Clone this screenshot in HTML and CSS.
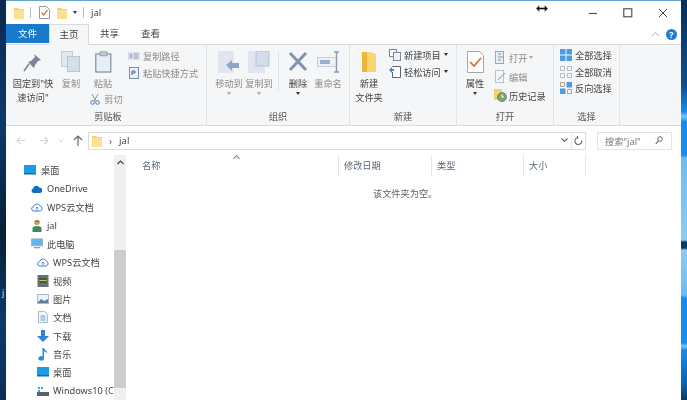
FILE: index.html
```html
<!DOCTYPE html>
<html lang="zh-CN">

<head>
  <meta charset="UTF-8" />
  <title>jal</title>
  <link rel="stylesheet" href="styles.css">
</head>

<body>
  <svg class="defs" width="0" height="0">
    <symbol id="folder" viewBox="0 0 10 12">
      <path d="M0 1h4l1 1h5v10H0z" fill="#fbe08f" />
      <path d="M0 1h4l1 1h5v1H0z" fill="#f5cf70" />
    </symbol>
    <symbol id="tree-cloud" viewBox="0 0 12 10">
      <path d="M3 9a2.2 2.2 0 0 1-.3-4.4 3.4 3.4 0 0 1 6.4-.6A2.6 2.6 0 0 1 9.3 9z" fill="#fff" stroke="#3f7fd6" stroke-width="1" />
      <path d="M6 8.5V5M4.6 6.4 6 5l1.4 1.4" fill="none" stroke="#3f7fd6" stroke-width=".8" />
    </symbol>
    <symbol id="desktop" viewBox="0 0 12 10">
      <rect x="0" y="0" width="12" height="9" fill="#1c9ae6" />
      <rect x="0" y="8" width="12" height="1.5" fill="#0f6cb5" />
    </symbol>
  </svg>

  <div class="screen">
    <div class="edge edge-left"><span class="edge-char">j</span></div>

    <div class="window">
      <div class="titlebar">
        <svg class="qa-folder" width="10" height="12"><use href="#folder" /></svg>
        <span class="qa-sep"></span>
        <svg class="qa-check" width="11" height="13" viewBox="0 0 11 13">
          <path d="M.5.5h7l3 3v9H.5z" fill="#fdfdfd" stroke="#9a9a9a" />
          <path d="M2.5 6.5l2 2.5 4-5" fill="none" stroke="#d9562b" stroke-width="1.2" />
        </svg>
        <svg class="qa-folder2" width="10" height="12"><use href="#folder" /></svg>
        <span class="caret qa-caret"></span>
        <span class="qa-sep qa-sep2"></span>
        <span class="title-text">jal</span>
        <div class="window-btns">
          <svg width="10" height="10" viewBox="0 0 10 10"><path d="M1 5.5h8" stroke="#555" stroke-width="1.2" /></svg>
          <svg width="10" height="10" viewBox="0 0 10 10"><rect x=".8" y=".8" width="8" height="8" fill="none" stroke="#444" stroke-width="1.1" /></svg>
          <svg width="10" height="10" viewBox="0 0 10 10"><path d="M1 1l8 8M9 1l-8 8" stroke="#444" stroke-width="1" /></svg>
        </div>
      </div>

      <div class="tabs">
        <div class="tab tab-file">文件</div>
        <div class="tab tab-active">主页</div>
        <div class="tab">共享</div>
        <div class="tab">查看</div>
        <div class="tabs-right">
          <svg width="9" height="6" viewBox="0 0 9 6"><path d="M1 5l3.5-3.5L8 5" fill="none" stroke="#aaa" stroke-width="1" /></svg>
          <span class="help">?</span>
        </div>
      </div>

      <div class="ribbon">
        <section class="group group-clip">
          <div class="group-body">
            <div class="big big-pin">
              <svg width="20" height="22" viewBox="0 0 20 22">
                <path d="M11 3l7 6-3 1-3 4-1 3-6-6 3-1 4-4z" fill="#7b8794" />
                <path d="M6 13l-5 7" stroke="#7b8794" stroke-width="1.6" />
              </svg>
              <span>固定到"快<br>速访问"</span>
            </div>
            <div class="big big-copy dim">
              <svg width="20" height="22" viewBox="0 0 20 22">
                <rect x=".5" y=".5" width="11" height="15" fill="#e3e8f0" stroke="#c5ccd6" />
                <rect x="6.5" y="5.5" width="12" height="15" fill="#d5deeb" stroke="#bac5d4" />
              </svg>
              <span>复制</span>
            </div>
            <div class="clip-col">
              <div class="big big-paste dim">
                <svg width="17" height="22" viewBox="0 0 17 22">
                  <rect x=".8" y="3" width="15" height="18" fill="#e9eef5" stroke="#7f8ea6" stroke-width="1.2" />
                  <rect x="5" y=".8" width="7" height="4" fill="#c4cbd5" stroke="#8d99ab" stroke-width=".8" />
                </svg>
                <span>粘贴</span>
              </div>
              <div class="small small-cut dim">
                <svg width="10" height="12" viewBox="0 0 10 12">
                  <path d="M2 1l4 7M8 1L4 8" stroke="#8b95a3" stroke-width="1" />
                  <circle cx="2.5" cy="9.5" r="1.8" fill="none" stroke="#4a78b5" />
                  <circle cx="7.5" cy="9.5" r="1.8" fill="none" stroke="#4a78b5" />
                </svg>
                <span>剪切</span>
              </div>
            </div>
            <div class="small-col small-col-clip dim">
              <div class="small">
                <svg width="12" height="8" viewBox="0 0 12 8"><rect width="12" height="8" fill="#d8deea" /><path d="M2 2l2 4M4 2l-2 4M6 2h4M6 4h4M6 6h4" stroke="#7f8ea6" stroke-width=".7" /></svg>
                <span>复制路径</span>
              </div>
              <div class="small">
                <svg width="10" height="12" viewBox="0 0 10 12"><rect x=".5" y=".5" width="9" height="11" fill="#eef2f7" stroke="#7f8ea6" /><path d="M3 8V4h3v2H3" fill="none" stroke="#3c6aa6" /></svg>
                <span>粘贴快捷方式</span>
              </div>
            </div>
          </div>
          <div class="group-label">剪贴板</div>
        </section>

        <section class="group group-org">
          <div class="group-body">
            <div class="big big-move dim">
              <svg width="22" height="22" viewBox="0 0 22 22">
                <rect x="0" y="0" width="16" height="22" fill="#dfe6f1" />
                <path d="M8 14l6-5v3h7v5h-7v3z" fill="#8fa6c4" />
              </svg>
              <span>移动到</span><span class="caret caret-dim"></span>
            </div>
            <div class="big big-copyto dim">
              <svg width="22" height="22" viewBox="0 0 22 22">
                <rect x="0" y="0" width="17" height="22" fill="#dfe6f1" />
                <rect x="8" y="0" width="13" height="15" fill="#d3dcea" stroke="#b6c2d3" />
              </svg>
              <span>复制到</span><span class="caret caret-dim"></span>
            </div>
            <span class="inner-sep"></span>
            <div class="big big-del">
              <svg width="20" height="20" viewBox="0 0 20 20"><path d="M2 1l16 17M18 1L2 18" stroke="#7f93b2" stroke-width="3" /></svg>
              <span>删除</span><span class="caret"></span>
            </div>
            <div class="big big-rename dim">
              <svg width="23" height="22" viewBox="0 0 23 22">
                <rect x=".5" y="6.5" width="19" height="9" fill="#eef2f7" stroke="#c5cedb" />
                <rect x="3" y="9" width="10" height="4" fill="#9db0ca" />
                <path d="M17 1h5M17 21h5M19.5 1v20" stroke="#8e9bae" stroke-width="1.4" fill="none" />
              </svg>
              <span>重命名</span>
            </div>
          </div>
          <div class="group-label">组织</div>
        </section>

        <section class="group group-new">
          <div class="group-body">
            <div class="big big-newf">
              <svg width="14" height="20" viewBox="0 0 14 20">
                <path d="M0 0h9l5 2v18H0z" fill="#fad673" />
                <path d="M0 0h5v20H0z" fill="#f2b53c" />
              </svg>
              <span>新建<br>文件夹</span>
            </div>
            <div class="small-col small-col-new">
              <div class="small">
                <svg width="12" height="12" viewBox="0 0 12 12"><rect x=".5" y=".5" width="7" height="7" fill="#fff" stroke="#7c8896" /><rect x="4.5" y="3.5" width="7" height="8" fill="#eef2f7" stroke="#7c8896" /></svg>
                <span>新建项目</span><span class="caret caret-side"></span>
              </div>
              <div class="small">
                <svg width="12" height="12" viewBox="0 0 12 12"><path d="M3.500.5h8v11h-8V6" fill="#fff" stroke="#5c6773" /><path d="M0 4l3-3v2h2v2H3v2z" fill="#3f8bd0" /></svg>
                <span>轻松访问</span><span class="caret caret-side"></span>
              </div>
            </div>
          </div>
          <div class="group-label">新建</div>
        </section>

        <section class="group group-open">
          <div class="group-body">
            <div class="big big-prop">
              <svg width="17" height="22" viewBox="0 0 17 22">
                <path d="M.5.5h12l4 4v17H.5z" fill="#fcfcfc" stroke="#a7a7a7" />
                <path d="M3 11l4 4 7-8" fill="none" stroke="#de6a33" stroke-width="1.7" />
              </svg>
              <span>属性</span><span class="caret"></span>
            </div>
            <div class="small-col small-col-open">
              <div class="small dim">
                <svg width="11" height="13" viewBox="0 0 11 13"><rect x=".5" y=".5" width="8" height="12" fill="#e9eef5" stroke="#9aa8bc" /><path d="M3 3h3M3 6h5M3 9h3" stroke="#7d92ad" /></svg>
                <span>打开</span><span class="caret caret-side caret-dim"></span>
              </div>
              <div class="small dim">
                <svg width="11" height="13" viewBox="0 0 11 13"><rect x=".5" y=".5" width="8" height="12" fill="#f4f6f9" stroke="#b7c2d1" /><path d="M3 10l7-7" stroke="#a9bad0" stroke-width="1.5" /></svg>
                <span>编辑</span>
              </div>
              <div class="small small-history">
                <svg width="13" height="13" viewBox="0 0 13 13"><rect x="0" y="0" width="8" height="11" fill="#f0d566" /><circle cx="8" cy="8" r="4.500" fill="#7fa86f" stroke="#666" stroke-width=".7" /><path d="M8 5.500V8h2" fill="none" stroke="#fff" /></svg>
                <span>历史记录</span>
              </div>
            </div>
          </div>
          <div class="group-label">打开</div>
        </section>

        <section class="group group-sel">
          <div class="group-body">
            <div class="small-col small-col-sel">
              <div class="small">
                <svg width="12" height="12" viewBox="0 0 12 12"><path d="M0 0h5.500v5.500H0zM6.500 0H12v5.500H6.500zM0 6.500h5.500V12H0zM6.500 6.500H12V12H6.500z" fill="#4e9be0" /></svg>
                <span>全部选择</span>
              </div>
              <div class="small">
                <svg width="12" height="12" viewBox="0 0 12 12"><path d="M.5.500h4v4h-4zM7.500.500h4v4h-4zM.5 7.500h4v4h-4zM7.500 7.500h4v4h-4z" fill="none" stroke="#b9bdc2" /></svg>
                <span>全部取消</span>
              </div>
              <div class="small">
                <svg width="12" height="12" viewBox="0 0 12 12"><path d="M.5.500h4v4h-4zM7.500 7.500h4v4h-4z" fill="none" stroke="#b9a08a" /><path d="M6.500 0H12v5.500H6.500zM0 6.500h5.500V12H0z" fill="#4e9be0" /></svg>
                <span>反向选择</span>
              </div>
            </div>
          </div>
          <div class="group-label">选择</div>
        </section>
      </div>

      <div class="addressbar">
        <div class="nav-btns">
          <svg width="10" height="9" viewBox="0 0 10 9"><path d="M9 4.500H1M4.500 1 1 4.500 4.500 8" fill="none" stroke="#d5d5d5" stroke-width="1.100" /></svg>
          <svg width="10" height="9" viewBox="0 0 10 9"><path d="M1 4.500h8M5.500 1 9 4.500 5.500 8" fill="none" stroke="#d5d5d5" stroke-width="1.100" /></svg>
          <svg class="nav-drop" width="6" height="4" viewBox="0 0 6 4"><path d="M.5.500l2.500 2.500L5.500.500" fill="none" stroke="#d5d5d5" /></svg>
          <svg class="nav-up" width="10" height="11" viewBox="0 0 10 11"><path d="M5 11V1M1 5l4-4 4 4" fill="none" stroke="#6b6b6b" stroke-width="1.200" /></svg>
        </div>
        <div class="path-box">
          <svg width="10" height="12"><use href="#folder" /></svg>
          <span class="path-arrow">›</span>
          <span class="path-text">jal</span>
          <svg class="path-chevron" width="7" height="5" viewBox="0 0 7 5"><path d="M.5.500 3.500 3.500 6.500.500" fill="none" stroke="#666" stroke-width="1.100" /></svg>
          <span class="refresh">
            <svg width="9" height="10" viewBox="0 0 9 10"><path d="M4 1.500A3.500 3.500 0 1 0 7.800 4.500M3.500 0v3" fill="none" stroke="#666" stroke-width="1.100" /></svg>
          </span>
        </div>
        <div class="search-box">
          <span>搜索"jal"</span>
          <svg width="8" height="9" viewBox="0 0 8 9"><circle cx="5" cy="3" r="2.300" fill="none" stroke="#666" /><path d="M3.300 4.800.8 8" stroke="#666" stroke-width="1.100" /></svg>
        </div>
      </div>

      <div class="content">
        <nav class="tree">
          <div class="tree-row lv0"><svg width="12" height="10"><use href="#desktop" /></svg><span>桌面</span></div>
          <div class="tree-row lv1">
            <svg width="12" height="8" viewBox="0 0 12 8"><path d="M2.500 8a2.300 2.300 0 0 1-.3-4.500A3.200 3.200 0 0 1 8.300 2.600 2.800 2.800 0 0 1 9.500 8z" fill="#0f6fc6" /></svg>
            <span>OneDrive</span>
          </div>
          <div class="tree-row lv1"><svg width="12" height="10"><use href="#tree-cloud" /></svg><span>WPS云文档</span></div>
          <div class="tree-row lv1">
            <svg width="10" height="13" viewBox="0 0 10 13"><circle cx="5" cy="3.500" r="2.800" fill="#c99a6b" /><path d="M3 2.500a2.800 2 0 0 1 4.500 0z" fill="#4a3425" /><path d="M.5 13V9.500C.5 8 2 7 5 7s4.500 1 4.500 2.500V13z" fill="#3e8a5d" /></svg>
            <span>jal</span>
          </div>
          <div class="tree-row lv1">
            <svg width="13" height="11" viewBox="0 0 13 11"><rect x=".5" y=".5" width="12" height="7.500" fill="#5fb6ec" stroke="#9fb2c4" /><path d="M3 10h7" stroke="#8a9aa8" stroke-width="1.400" /></svg>
            <span>此电脑</span>
          </div>
          <div class="tree-row lv2"><svg width="12" height="10"><use href="#tree-cloud" /></svg><span>WPS云文档</span></div>
          <div class="tree-row lv2">
            <svg width="11" height="12" viewBox="0 0 11 12"><rect width="11" height="12" fill="#67707a" /><rect x="2" y="3" width="7" height="5" fill="#3e5a3e" /><rect x="2" y="5" width="7" height="1" fill="#d8c34a" /></svg>
            <span>视频</span>
          </div>
          <div class="tree-row lv2">
            <svg width="12" height="10" viewBox="0 0 12 10"><rect x=".5" y=".5" width="11" height="9" fill="#eef4fa" stroke="#a8b8c8" /><path d="M1 8l3-3 3 2 4-2v4H1z" fill="#5e7f9e" /></svg>
            <span>图片</span>
          </div>
          <div class="tree-row lv2">
            <svg width="10" height="12" viewBox="0 0 10 12"><path d="M.5.500h6l3 3v8h-9z" fill="#f2f6fb" stroke="#a9bacb" /><path d="M2.500 5h5M2.500 7h5M2.500 9h5" stroke="#5fa2de" /></svg>
            <span>文档</span>
          </div>
          <div class="tree-row lv2">
            <svg width="12" height="12" viewBox="0 0 12 12"><path d="M4 0h4v6h4l-6 6-6-6h4z" fill="#2f83d8" /></svg>
            <span>下载</span>
          </div>
          <div class="tree-row lv2">
            <svg width="10" height="13" viewBox="0 0 10 13"><path d="M4.500 0h1.500c0 2 3.500 2.500 3.500 5.500C8.500 4 7 3.500 6 3.500V10.500a2.800 2.200 0 1 1-1.500-2z" fill="#1f8fe0" /></svg>
            <span>音乐</span>
          </div>
          <div class="tree-row lv2"><svg width="12" height="10"><use href="#desktop" /></svg><span>桌面</span></div>
          <div class="tree-row lv2">
            <svg width="12" height="10" viewBox="0 0 12 10"><rect y="6" width="12" height="4" fill="#5a6068" /><path d="M1 1h2v2H1zM4 1h2v2H4zM1 4h2v2H1z" fill="#39a6dd" /></svg>
            <span>Windows10 (C:)</span>
          </div>
        </nav>

        <div class="scrollbar">
          <svg class="scroll-up" width="7" height="5" viewBox="0 0 7 5"><path d="M.5 4 3.500 1l3 3" fill="none" stroke="#444" stroke-width="1.200" /></svg>
          <div class="scroll-thumb"></div>
        </div>

        <main class="list">
          <div class="list-head">
            <div class="col col-name">名称<span class="sort"></span></div>
            <div class="col col-date">修改日期</div>
            <div class="col col-type">类型</div>
            <div class="col col-size">大小</div>
          </div>
          <p class="empty">该文件夹为空。</p>
        </main>
      </div>
    </div>

    <div class="edge edge-right"></div>
    <svg class="cursor" width="12" height="7" viewBox="0 0 12 7"><path d="M0 3.500 3.500 0v2.500h5V0L12 3.500 8.500 7V4.500h-5V7z" fill="#111" stroke="#fff" stroke-width=".4" /></svg>
  </div>
</body>

</html>
```

FILE: styles.css
```css
* {
  box-sizing: border-box;
}

html, body {
  margin: 0;
  height: 400px;
  overflow: hidden;
}

body {
  font-family: "Noto Sans", "Noto Sans CJK SC", sans-serif;
  font-size: 9.2px;
  color: #444;
  background: #fff;
}

svg {
  display: block;
  flex: none;
}

.defs {
  position: absolute;
}

.screen {
  position: relative;
  display: flex;
  height: 400px;
}

.edge {
  flex: none;
  width: 6px;
}

.edge-left {
  background: linear-gradient(#0a2a50, #0a3a6e 30%, #062038 58%, #0b3a6c 80%, #0a2f58);
  color: #ddd;
  padding-top: 288px;
}

.edge-char {
  display: block;
  font-size: 9px;
  line-height: 10px;
  padding-left: 2px;
}

.edge-right {
  background: linear-gradient(#0a2f58 0, #0d4f8f 85px, #1a8be8 112px, #7fc8f5 116px, #1a8be8 122px, #1a8be8 155px, #6cbdf2 158px, #8accf5 240px, #0a3a6a 242px, #0a3a6a 248px, #8accf5 250px, #6cbdf2 295px, #1a8be8 298px, #1a8be8 343px, #7fc8f5 346px, #1a8be8 350px, #0d5fa8 385px, #0a3a6a 400px);
}

.window {
  flex: 1;
  min-width: 0;
  background: #fff;
  border-top: 1px solid #6aa2cf;
  display: flex;
  flex-direction: column;
  filter: blur(.3px);
}

.cursor {
  position: absolute;
  left: 536px;
  top: 5px;
}

/* title bar */
.titlebar {
  height: 23px;
  display: flex;
  align-items: center;
  padding-left: 8px;
}

.qa-sep {
  width: 1px;
  height: 11px;
  background: #bbb;
  margin-left: 6px;
}

.qa-check {
  margin-left: 8px;
}

.qa-folder2 {
  margin-left: 7px;
}

.qa-caret {
  margin-left: 6px;
}

.qa-sep2 {
  margin-left: 6px;
}

.title-text {
  margin-left: 7px;
  font-size: 9.5px;
}

.window-btns {
  margin-left: auto;
  display: flex;
  gap: 25px;
  padding-right: 13px;
}

.caret {
  display: block;
  width: 0;
  height: 0;
  border-left: 2.5px solid transparent;
  border-right: 2.5px solid transparent;
  border-top: 3px solid #333;
}

.caret-dim {
  border-top-color: #aaa;
}

/* tabs */
.tabs {
  height: 21px;
  display: flex;
  align-items: stretch;
  border-bottom: 1px solid #dadbdc;
}

.tab {
  width: 41px;
  text-align: center;
  line-height: 20px;
  font-size: 9.5px;
  color: #444;
}

.tab-file {
  width: 43px;
  height: 19px;
  line-height: 19px;
  background: #1979ca;
  color: #fff;
}

.tab-active {
  width: 40px;
  height: 21px;
  background: #f5f6f7;
  border: 1px solid #dadbdc;
  border-bottom: none;
}

.tabs-right {
  margin-left: auto;
  display: flex;
  align-items: center;
  gap: 6px;
  padding-right: 4px;
}

.help {
  width: 11px;
  height: 11px;
  border-radius: 50%;
  background: #1a7fd4;
  color: #fff;
  font-size: 9px;
  font-weight: bold;
  line-height: 11px;
  text-align: center;
}

/* ribbon */
.ribbon {
  height: 81px;
  display: flex;
  background: #f5f6f7;
  border-bottom: 1px solid #dadbdc;
}

.group {
  display: flex;
  flex-direction: column;
  flex: none;
  border-right: 1px solid #e2e3e5;
}

.group-body {
  flex: 1;
  min-height: 0;
  display: flex;
  padding-top: 6px;
}

.group-label {
  height: 15px;
  line-height: 14px;
  text-align: center;
  color: #555;
}

.group-clip { width: 201px; padding-left: 4px; }
.group-org { width: 143px; }
.group-new { width: 107px; }
.group-open { width: 97px; }
.group-sel { width: 66px; }

.big {
  flex: none;
  display: flex;
  flex-direction: column;
  align-items: center;
  text-align: center;
  line-height: 14px;
}

.big svg {
  height: 22px;
  margin-bottom: 4px;
}

.big .caret {
  margin-top: 1px;
}

.dim {
  color: #8c8c8c;
}

.big-pin { width: 46px; }
.big-copy { width: 30px; }
.big-paste { width: 34px; }
.big-move { width: 30px; margin-left: 7px; }
.big-copyto { width: 30px; }
.big-del { width: 30px; margin-left: 1px; }
.big-rename { width: 30px; }
.big-newf { width: 38px; }
.big-prop { width: 36px; }

.inner-sep {
  width: 1px;
  height: 40px;
  background: #e2e3e5;
  margin: 0 3px 0 4px;
}

.clip-col {
  display: flex;
  flex-direction: column;
  align-items: center;
  width: 34px;
}

.clip-col .big {
  margin-bottom: -1px;
}

.small {
  display: flex;
  align-items: center;
  gap: 3px;
  height: 17px;
  white-space: nowrap;
}

.small-cut {
  gap: 4px;
  padding-left: 7px;
}

.small-col {
  display: flex;
  flex-direction: column;
}

.small-col-clip { margin: -4px 0 0 8px; }
.small-col-clip svg { width: 12px; }
.small-col-new { margin: -5px 0 0 1px; }
.small-col-open { gap: 2px; margin: -2px 0 0 1px; }
.small-col-open .small { gap: 2px; }
.small-col-open svg { width: 13px; }
.small-col-sel { margin: -4px 0 0 6px; }
.small-col-sel .small { height: 16.5px; }

.caret-side {
  margin-left: 0;
}

/* address row */
.addressbar {
  height: 29px;
  display: flex;
  align-items: center;
  padding-right: 9px;
}

.nav-btns {
  display: flex;
  align-items: center;
  gap: 13px;
  padding-left: 10px;
  width: 82px;
}

.nav-drop,
.nav-up {
  margin-left: -4px;
}

.path-box {
  width: 498px;
  height: 18px;
  display: flex;
  align-items: center;
  border: 1px solid #dcdcdc;
  padding-left: 3px;
}

.path-arrow {
  margin-left: 7px;
  color: #666;
  font-size: 10px;
}

.path-text {
  margin-left: 7px;
  font-size: 9.5px;
}

.path-chevron {
  margin-left: auto;
  margin-right: 3px;
}

.refresh {
  width: 14px;
  height: 16px;
  display: flex;
  align-items: center;
  justify-content: center;
  border-left: 1px solid #e8e8e8;
}

.search-box {
  width: 75px;
  height: 18px;
  margin-left: 11px;
  display: flex;
  align-items: center;
  justify-content: space-between;
  border: 1px solid #e4e4e4;
  padding: 0 8px 0 7px;
  color: #777;
}

/* nav pane + list */
.content {
  flex: 1;
  min-height: 0;
  display: flex;
  overflow: hidden;
}

.tree {
  width: 108px;
  flex: none;
  padding-top: 6px;
  overflow: hidden;
}

.tree-row {
  height: 18.4px;
  display: flex;
  align-items: center;
  gap: 4px;
  white-space: nowrap;
  font-size: 9.2px;
  color: #444;
}

.lv0 { padding-left: 18px; gap: 5px; }
.lv1 { padding-left: 25px; }
.lv2 { padding-left: 31px; }

.tree-row svg {
  width: 12px;
}

.scrollbar {
  width: 12px;
  flex: none;
  background: #f0f0f0;
  padding-top: 5px;
}

.scroll-up {
  margin: 0 auto;
}

.scroll-thumb {
  height: 138px;
  margin-top: 85px;
  background: #cdcdcd;
}

.list {
  flex: 1;
  min-width: 0;
}

.list-head {
  display: flex;
  height: 21px;
}

.col {
  position: relative;
  line-height: 21px;
  color: #5a6a7d;
  border-right: 1px solid #e5e5e5;
}

.col-name { width: 213px; padding-left: 16px; }
.col-date { width: 93px; padding-left: 5px; }
.col-type { width: 92px; padding-left: 5px; }
.col-size { width: 62px; padding-left: 5px; }

.sort {
  position: absolute;
  left: 108px;
  top: 1px;
  width: 5px;
  height: 5px;
  border-left: 1px solid #888;
  border-top: 1px solid #888;
  transform: rotate(45deg);
}

.empty {
  margin: 11px 0 0;
  padding-left: 247px;
  color: #666;
  line-height: 14px;
}
```
